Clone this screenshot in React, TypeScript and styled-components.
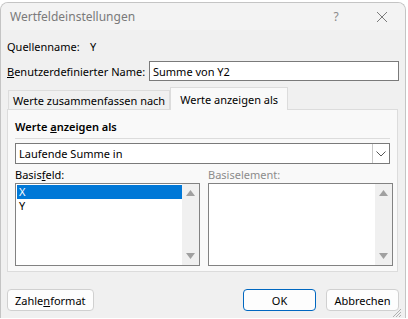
import React from 'react'
import styled, { createGlobalStyle } from 'styled-components'

const GlobalStyle = createGlobalStyle`
  html, body {
    margin: 0;
    padding: 0;
    background: #fff;
  }
  body {
    font-family: "Segoe UI", "Noto Sans", "Open Sans", sans-serif;
    font-size: 11px;
    color: #000;
  }
`

const Dialog = styled.div`
  margin-top: 2px;
  width: 404px;
  height: 315px;
  border: 1px solid #c4c4c4;
  border-bottom: none;
  border-radius: 8px 8px 0 0;
  background: #f0f0f0;
  display: flex;
  flex-direction: column;
  overflow: hidden;
  position: relative;
`

const TitleBar = styled.div`
  height: 27px;
  background: #f3f3f3;
  display: flex;
  align-items: center;
  padding-left: 9px;
  color: #7a7a7a;
  font-size: 12px;
`

const TitleText = styled.span`
  flex: 1;
`

const TitleButton = styled.span`
  width: 46px;
  text-align: center;
  color: #8a8a8a;
  display: flex;
  justify-content: center;
`

const Body = styled.div`
  flex: 1;
  padding: 6px 6px 0 6px;
  display: flex;
  flex-direction: column;
`

const Row = styled.div`
  display: flex;
  align-items: center;
  height: 20px;
`

const Label = styled.span<{ width?: number }>`
  width: ${ (p) => (p.width ? p.width + 'px' : 'auto') };
  white-space: nowrap;
`

const TextInput = styled.div`
  flex: 1;
  height: 18px;
  border: 1px solid #7a7a7a;
  background: #fff;
  display: flex;
  align-items: center;
  padding-left: 3px;
`

const TabStrip = styled.div`
  display: flex;
  align-items: flex-end;
  height: 23px;
  margin-top: 5px;
  padding-left: 1px;
`

const Tab = styled.div<{ active?: boolean }>`
  height: ${ (p) => (p.active ? 22 : 18) }px;
  padding: 0 ${ (p) => (p.active ? 9 : 4) }px;
  display: flex;
  align-items: center;
  background: ${ (p) => (p.active ? '#f9f9f9' : '#f0f0f0') };
  border: 1px solid #dcdcdc;
  border-bottom: none;
  margin-bottom: ${ (p) => (p.active ? -1 : 0) }px;
  position: relative;
  z-index: ${ (p) => (p.active ? 1 : 0) };
  white-space: nowrap;
`

const Panel = styled.div`
  width: 391px;
  height: 163px;
  border: 1px solid #dcdcdc;
  background: #f9f9f9;
  padding: 9px 7px 0 7px;
  box-sizing: border-box;
  display: flex;
  flex-direction: column;
`

const GroupTitle = styled.div`
  font-weight: 600;
  padding-bottom: 4px;
  border-bottom: 1px solid #dcdcdc;
  margin-bottom: 4px;
`

const Select = styled.div`
  height: 21px;
  border: 1px solid #7a7a7a;
  background: #fff;
  display: flex;
  align-items: center;
  box-sizing: border-box;
`

const SelectValue = styled.span`
  flex: 1;
  padding-left: 3px;
`

const SelectButton = styled.span`
  width: 16px;
  height: 19px;
  border-left: 1px solid #c8c8c8;
  display: flex;
  align-items: center;
  justify-content: center;
`

const Columns = styled.div`
  display: grid;
  grid-template-columns: 185px 185px;
  column-gap: 8px;
  margin-top: 3px;
`

const Column = styled.div`
  display: flex;
  flex-direction: column;
`

const FieldLabel = styled.div<{ disabled?: boolean }>`
  color: ${ (p) => (p.disabled ? '#8c8c8c' : '#000') };
  height: 16px;
  line-height: 16px;
`

const ListBox = styled.div`
  height: 83px;
  border: 1px solid #828282;
  background: #fff;
  display: flex;
  box-sizing: border-box;
`

const ListItems = styled.div`
  flex: 1;
  padding: 1px 0 0 1px;
`

const ListItem = styled.div<{ selected?: boolean }>`
  height: 14px;
  line-height: 14px;
  padding-left: 2px;
  background: ${ (p) => (p.selected ? '#0078d7' : 'transparent') };
  color: ${ (p) => (p.selected ? '#fff' : '#000') };
`

const ScrollBar = styled.div`
  width: 17px;
  background: #f0f0f0;
  display: flex;
  flex-direction: column;
  justify-content: space-between;
  align-items: center;
  padding: 6px 0;
`

const Footer = styled.div`
  display: flex;
  align-items: center;
  margin-top: 17px;
  gap: 10px;
`

const Button = styled.div<{ primary?: boolean }>`
  height: 22px;
  min-width: 73px;
  padding: 0 7px;
  box-sizing: border-box;
  border: 1px solid ${ (p) => (p.primary ? '#0067c0' : '#d0d0d0') };
  border-radius: 4px;
  background: #fdfdfd;
  display: flex;
  align-items: center;
  justify-content: center;
  white-space: nowrap;
`

const Spacer = styled.div`
  flex: 1;
`

const Grip = styled.div`
  position: absolute;
  right: 3px;
  bottom: 2px;
  width: 10px;
  height: 10px;
`

const Triangle = ({ up }: { up?: boolean }) => (
  <svg width="9" height="6" viewBox="0 0 9 6">
    <path d={ up ? 'M0 6 L4.5 0 L9 6 Z' : 'M0 0 L4.5 6 L9 0 Z' } fill="#a0a0a0" />
  </svg>
)

export default function App() {
  return (
    <>
      <GlobalStyle />
      <Dialog>
        <TitleBar>
          <TitleText>Wertfeldeinstellungen</TitleText>
          <TitleButton>?</TitleButton>
          <TitleButton>
            <svg width="12" height="12" viewBox="0 0 12 12">
              <path d="M1 1 L11 11 M11 1 L1 11" stroke="#7a7a7a" strokeWidth="1" />
            </svg>
          </TitleButton>
        </TitleBar>
        <Body>
          <Row>
            <Label width={ 83 }>Quellenname:</Label>
            <span>Y</span>
          </Row>
          <Row style={ { marginTop: 5 } }>
            <Label width={ 142 }><u>B</u>enutzerdefinierter Name:</Label>
            <TextInput>Summe von Y2</TextInput>
          </Row>
          <TabStrip>
            <Tab>Werte zusammenfassen nach</Tab>
            <Tab active>Werte anzeigen als</Tab>
          </TabStrip>
          <Panel>
            <GroupTitle>Werte <u>a</u>nzeigen als</GroupTitle>
            <Select>
              <SelectValue>Laufende Summe in</SelectValue>
              <SelectButton>
                <svg width="10" height="6" viewBox="0 0 10 6">
                  <path d="M0.5 0.5 L5 5 L9.5 0.5" stroke="#555" fill="none" strokeWidth="1" />
                </svg>
              </SelectButton>
            </Select>
            <Columns>
              <Column>
                <FieldLabel>Basis<u>f</u>eld:</FieldLabel>
                <ListBox>
                  <ListItems>
                    <ListItem selected>X</ListItem>
                    <ListItem>Y</ListItem>
                  </ListItems>
                  <ScrollBar>
                    <Triangle up />
                    <Triangle />
                  </ScrollBar>
                </ListBox>
              </Column>
              <Column>
                <FieldLabel disabled>Basiselement:</FieldLabel>
                <ListBox>
                  <ListItems />
                  <ScrollBar>
                    <Triangle up />
                    <Triangle />
                  </ScrollBar>
                </ListBox>
              </Column>
            </Columns>
          </Panel>
          <Footer>
            <Button>Zahle<u>n</u>format</Button>
            <Spacer />
            <Button primary>OK</Button>
            <Button>Abbrechen</Button>
          </Footer>
        </Body>
        <Grip>
          <svg width="10" height="10" viewBox="0 0 10 10">
            <path d="M9 1 L1 9 M9 4 L4 9 M9 7 L7 9" stroke="#b0b0b0" strokeWidth="1" />
          </svg>
        </Grip>
      </Dialog>
    </>
  )
}
